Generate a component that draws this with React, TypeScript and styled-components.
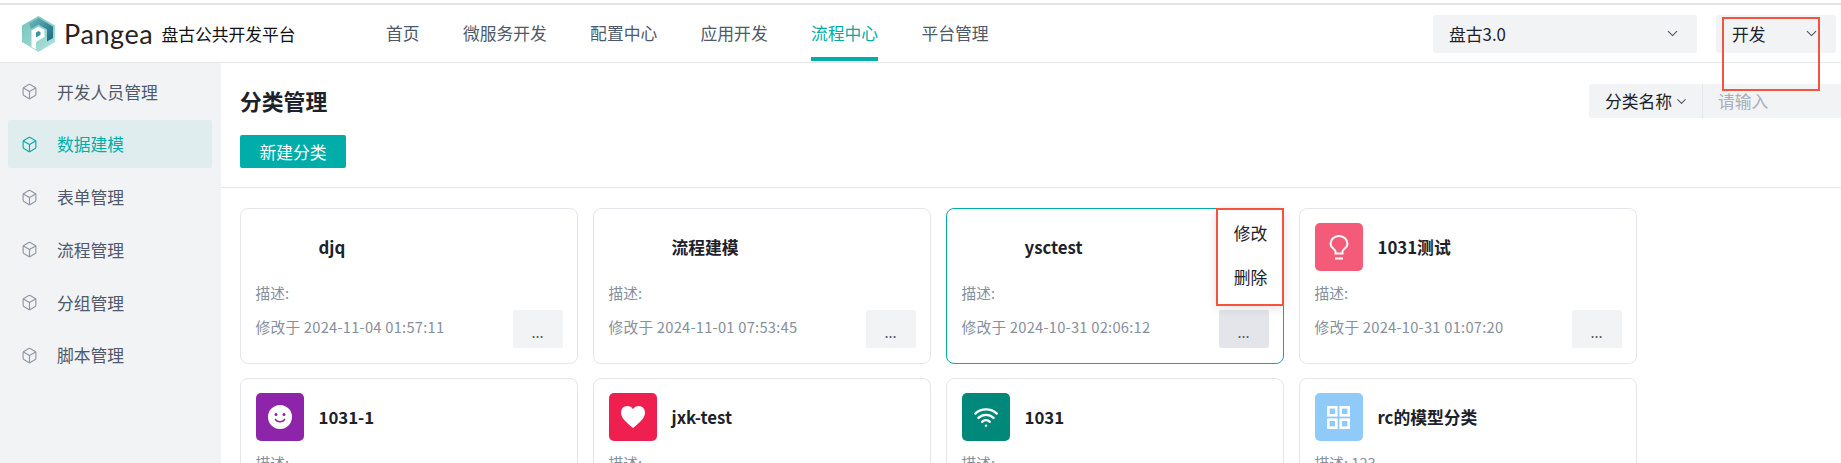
import React from "react";
import styled, { createGlobalStyle } from "styled-components";
import { Box, ChevronDown, Wifi } from "lucide-react";

const Global = createGlobalStyle`
  html, body { margin: 0; padding: 0; background: #fff; }
  body { font-family: "Noto Sans CJK SC", "Liberation Sans", sans-serif; }
  * { box-sizing: border-box; }
`;

const Page = styled.div`
  position: relative;
  width: 1841px;
  height: 463px;
  overflow: hidden;
  padding-top: 3px;
  background: #fff;
`;
const TopRule = styled.div`
  height: 2px;
  background: #e3e3e3;
`;
const Header = styled.header`
  display: flex;
  align-items: stretch;
  height: 58px;
  padding: 0 5px 0 22px;
  border-bottom: 1px solid #e5e6eb;
`;
const Brand = styled.div`
  display: flex;
  align-items: center;
  width: 274px;
`;
const BrandName = styled.span`
  margin-left: 9px;
  font-family: "Lato", sans-serif;
  font-size: 27px;
  line-height: 1;
  letter-spacing: 0.6px;
  color: #2a2222;
`;
const BrandSub = styled.span`
  margin-left: 8px;
  font-size: 16.8px;
  color: #111;
  white-space: nowrap;
`;
const TopNav = styled.nav`
  display: flex;
  gap: 43.3px;
  margin-left: 90px;
`;
const TopLink = styled.a<{ $active?: boolean }>`
  display: flex;
  align-items: center;
  height: 56px;
  font-size: 16.8px;
  white-space: nowrap;
  color: ${(p) => (p.$active ? "#00ada9" : "#4e5969")};
  border-bottom: 4px solid ${(p) => (p.$active ? "#00ada9" : "transparent")};
  border-top: 4px solid transparent;
`;
const Selects = styled.div`
  display: flex;
  align-items: center;
  gap: 19px;
  margin-left: auto;
`;
const Select = styled.div<{ $w: number }>`
  display: flex;
  align-items: center;
  justify-content: space-between;
  width: ${(p) => p.$w}px;
  height: 38px;
  padding: 0 16px;
  border-radius: 3px;
  background: #f2f3f5;
  font-size: 16.8px;
  color: #1d2129;
  svg { color: #4e5969; }
`;
const Body = styled.div`
  display: flex;
  height: 400px;
`;
const Side = styled.aside`
  display: flex;
  flex-direction: column;
  gap: 4.7px;
  flex: 0 0 221px;
  padding: 4.800px 9px 0 8px;
  background: #f2f3f5;
`;
const SideItem = styled.div<{ $active?: boolean }>`
  display: flex;
  align-items: center;
  flex: 0 0 48px;
  padding-left: 13px;
  border-radius: 3px;
  font-size: 16.8px;
  color: ${(p) => (p.$active ? "#00ada9" : "#4e5969")};
  background: ${(p) => (p.$active ? "#e0edee" : "transparent")};
  svg {
    margin-right: 19px;
    color: ${(p) => (p.$active ? "#00ada9" : "#8f97a5")};
  }
`;
const Content = styled.main`
  flex: 1;
  min-width: 0;
`;
const Toolbar = styled.div`
  padding: 21px 0 19px 19px;
  border-bottom: 1px solid #e5e6eb;
`;
const TitleRow = styled.div`
  display: flex;
  align-items: center;
  justify-content: space-between;
  height: 34px;
`;
const Title = styled.h1`
  margin: -2px 0 0;
  font-size: 21.8px;
  font-weight: 700;
  color: #1d2129;
`;
const Search = styled.div`
  display: flex;
  align-items: center;
  width: 252px;
  height: 34px;
  border-radius: 3px 0 0 3px;
  background: #f2f3f5;
`;
const SearchField = styled.div`
  display: flex;
  align-items: center;
  gap: 2px;
  flex: 0 0 114px;
  height: 100%;
  padding-left: 16px;
  border-right: 1px solid #e5e6eb;
  font-size: 16.8px;
  color: #1d2129;
  white-space: nowrap;
  svg { color: #4e5969; }
`;
const SearchInput = styled.input`
  flex: 1;
  min-width: 0;
  height: 100%;
  padding: 0 0 0 15px;
  border: 0;
  outline: 0;
  background: transparent;
  font: inherit;
  font-size: 16.8px;
  &::placeholder { color: #a9aeb8; opacity: 1; }
`;
const PrimaryButton = styled.button`
  display: block;
  width: 106px;
  height: 33px;
  margin-top: 17px;
  padding: 0;
  border: 0;
  border-radius: 2px;
  background: #00ada9;
  color: #fff;
  font: inherit;
  font-size: 16.8px;
`;
const Grid = styled.div`
  display: grid;
  grid-template-columns: repeat(4, 338px);
  gap: 14px 15px;
  padding: 20px 0 0 18.500px;
`;
const Card = styled.article<{ $active?: boolean }>`
  position: relative;
  height: 156px;
  padding: 14px 14px 14px 15px;
  border: 1px solid ${(p) => (p.$active ? "#00ada9" : "#e5e6eb")};
  border-radius: 8px;
  background: #fff;
`;
const CardHead = styled.div`
  display: flex;
  align-items: center;
  gap: 15px;
  height: 48px;
`;
const IconBox = styled.div<{ $bg?: string }>`
  display: flex;
  align-items: center;
  justify-content: center;
  flex: 0 0 48px;
  height: 48px;
  border-radius: 5px;
  background: ${(p) => p.$bg ?? "transparent"};
  color: #fff;
`;
const Name = styled.div`
  font-size: 16.8px;
  font-weight: 700;
  color: #1d2129;
`;
const Desc = styled.div`
  margin-top: 11px;
  font-size: 14.7px;
  line-height: 22px;
  color: #86909c;
`;
const Footer = styled.div`
  display: flex;
  align-items: center;
  justify-content: space-between;
  margin-top: 6px;
`;
const Modified = styled.div`
  padding-bottom: 6px;
  font-size: 14.7px;
  letter-spacing: 0.25px;
  color: #86909c;
  white-space: nowrap;
`;
const MoreButton = styled.button<{ $active?: boolean }>`
  flex: 0 0 50px;
  height: 38px;
  padding: 4px 0 0;
  border: 0;
  border-radius: 2px;
  background: ${(p) => (p.$active ? "#e3e5ea" : "#f2f3f5")};
  color: #4e5969;
  font: inherit;
  font-size: 14.7px;
`;
const Menu = styled.div`
  position: absolute;
  top: -1px;
  right: -1px;
  display: flex;
  flex-direction: column;
  align-items: center;
  gap: 10px;
  width: 68px;
  height: 98px;
  padding: 6px 0 0 2px;
  background: #fff;
  box-shadow: 0 2px 10px rgba(0, 0, 0, 0.12);
  border: 2px solid #f5533d;
  font-size: 16.8px;
  color: #1d2129;
`;
const MenuItem = styled.div`
  line-height: 34px;
`;
const Annotation = styled.div`
  position: absolute;
  top: 17px;
  left: 1722px;
  width: 98px;
  height: 74px;
  border: 2px solid #f5533d;
`;

const Logo = () => (
  <svg width="33" height="36" viewBox="0 0 33 36" style={{ flex: "none" }}>
    <defs>
      <linearGradient id="lg" x1="0" y1="0" x2="0.8" y2="1">
        <stop offset="0" stopColor="#6fc2bb" />
        <stop offset="1" stopColor="#aee0da" />
      </linearGradient>
      <linearGradient id="ld" x1="0" y1="0" x2="1" y2="0.8">
        <stop offset="0" stopColor="#6dbcbc" />
        <stop offset="1" stopColor="#1f6f8b" />
      </linearGradient>
    </defs>
    <path d="M16.500 0 33 9.500V26L16.500 36 0 26V9.500z" fill="url(#lg)" />
    <path d="M7 7.500 16.500 2 31 10.500V22l-6 3.500V13.500L16.500 8.500 9 13z" fill="url(#ld)" />
    <path d="M9.500 14.500 16.500 10.500 22.500 14v7L14 26v7.500L9.500 31z" fill="#fff" />
    <path d="M14 16.500 16.500 15 18.500 16.200V19L14 21.600z" fill="#3c93a5" />
  </svg>
);

const Bulb = () => (
  <svg width="20" height="25" viewBox="0 0 20 25" fill="none" stroke="#fff" strokeWidth="2">
    <path d="M6.500 18.500v-2.200C6.500 14.500 1.500 13 1.500 9a8.500 8 0 0 1 17 0c0 4-5 5.500-5 7.300v2.200z" />
    <path d="M6 23.500h8" />
  </svg>
);
const Smile = () => (
  <svg width="24" height="24" viewBox="0 0 24 24">
    <circle cx="12" cy="12" r="12" fill="#fff" />
    <circle cx="8" cy="9.500" r="1.500" fill="#8e24aa" />
    <circle cx="16" cy="9.500" r="1.500" fill="#8e24aa" />
    <path d="M7.500 14.500c1.500 3 7.500 3 9 0" fill="none" stroke="#8e24aa" strokeWidth="1.600" strokeLinecap="round" />
  </svg>
);
const Heart = () => (
  <svg width="24" height="22" viewBox="0 0 24 22">
    <path d="M12 22C4 15.500 0 11.500 0 6.500 0 2.800 2.800 0 6.300 0 8.700 0 10.800 1.200 12 3.200 13.200 1.200 15.300 0 17.700 0 21.200 0 24 2.800 24 6.500c0 5-4 9-12 15.500z" fill="#fff" />
  </svg>
);
const Squares = () => (
  <svg width="23" height="23" viewBox="0 0 23 23" fill="none" stroke="#fff" strokeWidth="2.600">
    <rect x="1.300" y="1.300" width="8" height="8" />
    <rect x="13.700" y="1.300" width="8" height="8" />
    <rect x="1.300" y="13.700" width="8" height="8" />
    <rect x="13.700" y="13.700" width="8" height="8" />
  </svg>
);

type CardData = {
  name: string;
  desc?: string;
  date?: string;
  bg?: string;
  icon?: React.ReactNode;
  active?: boolean;
};

const cards: CardData[] = [
  { name: "djq", date: "2024-11-04 01:57:11" },
  { name: "流程建模", date: "2024-11-01 07:53:45" },
  { name: "ysctest", date: "2024-10-31 02:06:12", active: true },
  { name: "1031测试", date: "2024-10-31 01:07:20", bg: "#f45b78", icon: <Bulb /> },
  { name: "1031-1", bg: "#8e24aa", icon: <Smile /> },
  { name: "jxk-test", bg: "#ef2050", icon: <Heart /> },
  { name: "1031", bg: "#00897b", icon: <Wifi size={26} strokeWidth={2.2} /> },
  { name: "rc的模型分类", desc: "123", bg: "#90caf9", icon: <Squares /> },
];

const topLinks = ["首页", "微服务开发", "配置中心", "应用开发", "流程中心", "平台管理"];
const sideLinks = ["开发人员管理", "数据建模", "表单管理", "流程管理", "分组管理", "脚本管理"];

export default function App() {
  return (
    <Page>
      <Global />
      <TopRule />
      <Header>
        <Brand>
          <Logo />
          <BrandName>Pangea</BrandName>
          <BrandSub>盘古公共开发平台</BrandSub>
        </Brand>
        <TopNav>
          {topLinks.map((l) => (
            <TopLink key={l} $active={l === "流程中心"}>
              {l}
            </TopLink>
          ))}
        </TopNav>
        <Selects>
          <Select $w={264}>
            盘古3.0
            <ChevronDown size={17} strokeWidth={1.6} />
          </Select>
          <Select $w={120}>
            开发
            <ChevronDown size={17} strokeWidth={1.6} />
          </Select>
        </Selects>
      </Header>
      <Annotation />
      <Body>
        <Side>
          {sideLinks.map((l) => (
            <SideItem key={l} $active={l === "数据建模"}>
              <Box size={17} strokeWidth={1.6} />
              {l}
            </SideItem>
          ))}
        </Side>
        <Content>
          <Toolbar>
            <TitleRow>
              <Title>分类管理</Title>
              <Search>
                <SearchField>
                  分类名称
                  <ChevronDown size={15} strokeWidth={1.8} />
                </SearchField>
                <SearchInput placeholder="请输入" />
              </Search>
            </TitleRow>
            <PrimaryButton>新建分类</PrimaryButton>
          </Toolbar>
          <Grid>
            {cards.map((c) => (
              <Card key={c.name} $active={c.active}>
                <CardHead>
                  <IconBox $bg={c.bg}>{c.icon}</IconBox>
                  <Name>{c.name}</Name>
                </CardHead>
                <Desc>描述:{c.desc ? ` ${c.desc}` : ""}</Desc>
                {c.date && (
                  <Footer>
                    <Modified>修改于 {c.date}</Modified>
                    <MoreButton $active={c.active}>...</MoreButton>
                  </Footer>
                )}
                {c.active && (
                  <Menu>
                    <MenuItem>修改</MenuItem>
                    <MenuItem>删除</MenuItem>
                  </Menu>
                )}
              </Card>
            ))}
          </Grid>
        </Content>
      </Body>
    </Page>
  );
}
